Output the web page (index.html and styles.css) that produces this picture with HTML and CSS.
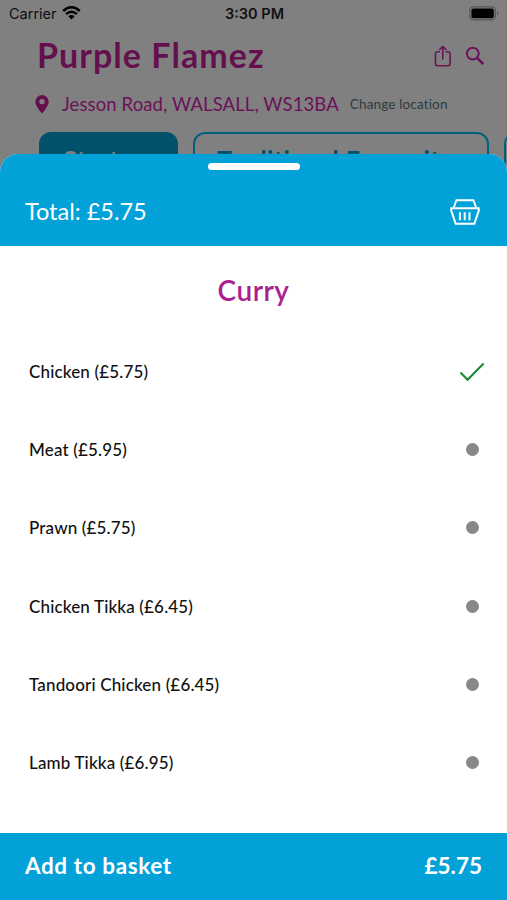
FILE: index.html
```html
<!DOCTYPE html>
<html lang="en">
<head>
<meta charset="utf-8">
<title>Purple Flamez</title>
<link rel="stylesheet" href="styles.css">
</head>
<body>
<div class="phone">
  <main class="page">
    <div class="status">
      <div class="carrier"><span>Carrier</span>
        <svg width="19" height="14" viewBox="0 0 19 14"><path d="M1.2 5Q9.5-2.4 17.8 5" fill="none" stroke="#000" stroke-width="2.5"/><path d="M4.1 8Q9.5 3.4 14.9 8" fill="none" stroke="#000" stroke-width="2.4"/><path d="M6.3 10.3Q9.5 7.8 12.7 10.3L9.5 13.6Z"/></svg>
      </div>
      <span class="time">3:30 PM</span>
      <svg class="battery" width="31" height="15" viewBox="0 0 31 15"><rect x=".8" y=".8" width="25.6" height="13" rx="3.6" fill="none" stroke="#555" stroke-width="1.2"/><rect x="2.4" y="2.4" width="22.4" height="9.8" rx="2"/><path d="M28 5.2Q31.2 7.3 28 9.4Z" fill="#555"/></svg>
    </div>
    <header class="title-row">
      <h1>Purple Flamez</h1>
      <svg class="share" width="18" height="23" viewBox="0 0 18 23" fill="none" stroke="#6b1259" stroke-width="1.6"><path d="M6 6.7H3.6Q1.5 6.7 1.5 8.8V18.6Q1.5 20.8 3.6 20.8H14Q16.1 20.8 16.1 18.6V8.8Q16.1 6.7 14 6.7H11.8M8.8 14.4V1.7M5.2 5 8.8 1.4 12.4 5"/></svg>
      <svg class="search" width="20" height="20" viewBox="0 0 20 20" fill="none" stroke="#6b1259"><circle cx="7.8" cy="7.6" r="5.9" stroke-width="2"/><path d="M12.1 11.9 18.3 18" stroke-width="2.6"/></svg>
    </header>
    <div class="address-row">
      <svg width="14" height="19" viewBox="0 0 14 19"><path fill="#64104f" fill-rule="evenodd" d="M7 0A6.7 6.7 0 0 0 .3 6.7C.3 11 7 18.5 7 18.5S13.7 11 13.7 6.7A6.7 6.7 0 0 0 7 0ZM7 3.9A2.7 2.7 0 1 1 7 9.3A2.7 2.7 0 0 1 7 3.9Z"/></svg>
      <span class="address">Jesson Road, WALSALL, WS13BA</span>
      <span class="change">Change location</span>
    </div>
    <nav class="tabs">
      <span class="tab active">Starters</span>
      <span class="tab wide">Traditional Favourites</span>
      <span class="tab next"></span>
    </nav>
  </main>
  <section class="sheet">
    <header class="sheet-head">
      <div class="handle"></div>
      <div class="total-row">
        <span class="total">Total: £5.75</span>
        <svg width="32" height="28" viewBox="0 0 32 28" fill="none" stroke="#fff"><path d="M4.9 9.2 7.4 2.2H24.4L27 9.2" stroke-width="1.9"/><path d="M1.3 10.3H30.7M2.2 10.5V12.5L6.7 25.8H25.3L29.8 12.5V10.5" stroke-width="2"/><path d="M10.9 14.2V22.2M15.7 14.2V22.2M20.5 14.2V22.2" stroke-width="2"/></svg>
      </div>
    </header>
    <h2>Curry</h2>
    <ul class="options">
      <li><span>Chicken (£5.75)</span><svg class="tick" width="26" height="20" viewBox="0 0 26 20"><path d="M1.5 10.5 8.6 17.8 24.6 1.5" fill="none" stroke="#168a30" stroke-width="2"/></svg></li>
      <li><span>Meat (£5.95)</span><i class="dot"></i></li>
      <li><span>Prawn (£5.75)</span><i class="dot"></i></li>
      <li><span>Chicken Tikka (£6.45)</span><i class="dot"></i></li>
      <li><span>Tandoori Chicken (£6.45)</span><i class="dot"></i></li>
      <li><span>Lamb Tikka (£6.95)</span><i class="dot"></i></li>
    </ul>
    <footer class="basket"><span class="add">Add to basket</span><span class="price">£5.75</span></footer>
  </section>
</div>
</body>
</html>
```
FILE: styles.css
```css
* { box-sizing: border-box; }
body { margin: 0; font-family: Lato, "Liberation Sans", sans-serif; font-variant-ligatures: none; }
svg { display: block; flex: none; }
h1, h2, ul { margin: 0; padding: 0; }
.phone { position: relative; width: 507px; height: 900px; overflow: hidden; background: #808080; }
.page { height: 180px; overflow: hidden; }
.status { display: grid; grid-template-columns: 1fr auto 1fr; align-items: center; height: 28px; padding: 0 7px 0 9px; font: 14.5px/28px Inter, sans-serif; color: #111; }
.carrier { display: flex; align-items: center; gap: 5px; }
.carrier svg { margin-top: -2px; }
.time { font-weight: 600; }
.battery { justify-self: end; margin-top: -2px; }
.title-row { display: flex; align-items: center; height: 56px; padding: 0 22px 0 37px; color: #64104f; }
h1 { flex: 1; font-size: 34px; line-height: 54px; padding-bottom: 2px; font-weight: 700; letter-spacing: 1.05px; }
.share { margin-right: 13px; }
.address-row { display: flex; align-items: center; height: 40px; padding-left: 35px; white-space: nowrap; }
.address { margin-left: 13px; font-size: 18.5px; letter-spacing: .11px; color: #6b1259; }
.change { margin-left: 11px; font-size: 13.5px; letter-spacing: .15px; color: #2e3b40; }
.tabs { display: flex; gap: 15px; padding: 8px 0 0 39px; }
.tab { flex: none; height: 56px; border: 2px solid #02607f; border-radius: 12px; text-align: center; font-size: 25px; line-height: 51px; font-weight: 700; color: #02526c; letter-spacing: .4px; white-space: nowrap; }
.active { width: 139px; background: #02526c; border-color: #02526c; color: #808080; }
.wide { width: 296px; }
.next { width: 100px; }
.sheet { position: absolute; inset: 154px 0 0; display: flex; flex-direction: column; background: #fff; border-radius: 18px 18px 0 0; overflow: hidden; }
.sheet-head { height: 92px; background: #02a2d9; color: #fff; padding-top: 9px; }
.handle { width: 92px; height: 7px; margin: 0 auto; border-radius: 4px; background: #fff; }
.total-row { display: flex; align-items: center; justify-content: space-between; height: 56px; margin-top: 14px; padding: 0 26px 0 25px; font-size: 23.5px; }
.total { padding-bottom: 2px; }
h2 { height: 87px; text-align: center; font-size: 28px; line-height: 88px; font-weight: 600; letter-spacing: .5px; color: #a9218e; }
.options { list-style: none; flex: 1; }
.options li { display: flex; align-items: center; justify-content: space-between; height: 78.2px; padding: 0 28.5px 1px 29px; font-size: 17px; font-weight: 500; letter-spacing: .16px; color: #111; }
.options .tick { margin-right: -6.5px; }
.dot { width: 13px; height: 13px; border-radius: 50%; background: #888; }
.basket { display: flex; align-items: center; justify-content: space-between; height: 67px; padding: 0 25px 2px 25px; background: #02a2d9; color: #fff; font-size: 22.5px; font-weight: 700; }
.add { letter-spacing: .6px; }
```
